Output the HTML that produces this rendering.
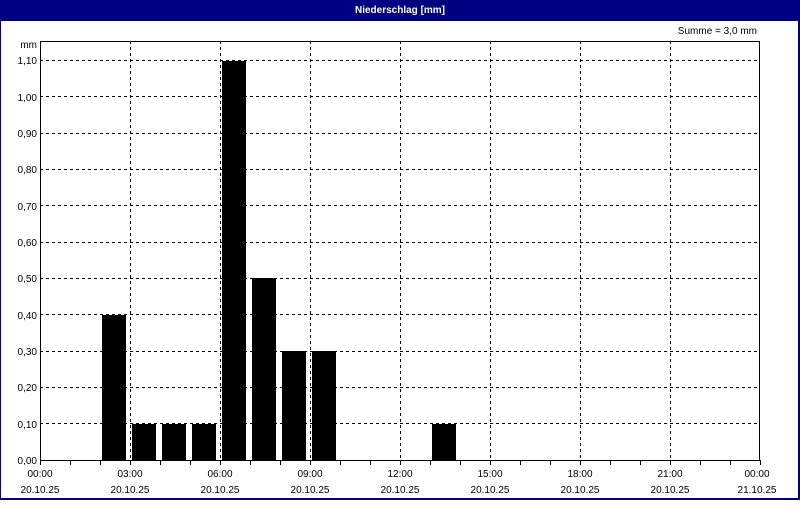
<!DOCTYPE html>
<html><head><style>body{margin:0;width:800px;height:500px;overflow:hidden;background:#fff}</style></head>
<body>
<svg width="800" height="500" xmlns="http://www.w3.org/2000/svg" font-family="Liberation Sans, sans-serif" font-size="10">
<rect x="0" y="0" width="800" height="500" fill="#000080"/>
<rect x="1" y="21" width="797" height="477" fill="#fff"/>
<text x="400" y="13" fill="#fff" font-weight="bold" text-anchor="middle" font-size="10">Niederschlag [mm]</text>
<text x="757" y="34" text-anchor="end">Summe = 3,0 mm</text>
<text x="37" y="48" text-anchor="end">mm</text>
<g stroke="#000" stroke-dasharray="3,3" stroke-width="1">
<line x1="40" y1="423.5" x2="760" y2="423.5"/><line x1="40" y1="387.5" x2="760" y2="387.5"/>
<line x1="40" y1="351.5" x2="760" y2="351.5"/><line x1="40" y1="314.5" x2="760" y2="314.5"/>
<line x1="40" y1="278.5" x2="760" y2="278.5"/><line x1="40" y1="242.5" x2="760" y2="242.5"/>
<line x1="40" y1="205.5" x2="760" y2="205.5"/><line x1="40" y1="169.5" x2="760" y2="169.5"/>
<line x1="40" y1="133.5" x2="760" y2="133.5"/><line x1="40" y1="96.5" x2="760" y2="96.5"/>
<line x1="40" y1="60.5" x2="760" y2="60.5"/>
<line x1="130.5" y1="41" x2="130.5" y2="460"/><line x1="220.5" y1="41" x2="220.5" y2="460"/>
<line x1="310.5" y1="41" x2="310.5" y2="460"/><line x1="400.5" y1="41" x2="400.5" y2="460"/>
<line x1="490.5" y1="41" x2="490.5" y2="460"/><line x1="580.5" y1="41" x2="580.5" y2="460"/>
<line x1="670.5" y1="41" x2="670.5" y2="460"/>
</g>
<g fill="#000">
<rect x="102" y="315" width="24" height="145"/>
<rect x="132" y="424" width="24" height="36"/>
<rect x="162" y="424" width="24" height="36"/>
<rect x="192" y="424" width="24" height="36"/>
<rect x="222" y="61" width="24" height="399"/>
<rect x="252" y="278" width="24" height="182"/>
<rect x="282" y="351" width="24" height="109"/>
<rect x="312" y="351" width="24" height="109"/>
<rect x="432" y="424" width="24" height="36"/>
</g>
<rect x="40.5" y="41.5" width="719" height="419" fill="none" stroke="#000"/>
<g stroke="#000">
<path d="M40.5 460v5M70.5 460v5M100.5 460v5M130.5 460v5M160.5 460v5M190.5 460v5M220.5 460v5M250.5 460v5M280.5 460v5M310.5 460v5M340.5 460v5M370.5 460v5M400.5 460v5M430.5 460v5M460.5 460v5M490.5 460v5M520.5 460v5M550.5 460v5M580.5 460v5M610.5 460v5M640.5 460v5M670.5 460v5M700.5 460v5M730.5 460v5M760.5 460v5"/>
</g>
<g text-anchor="end">
<text x="37" y="464">0,00</text><text x="37" y="428">0,10</text><text x="37" y="391">0,20</text>
<text x="37" y="355">0,30</text><text x="37" y="319">0,40</text><text x="37" y="282">0,50</text>
<text x="37" y="246">0,60</text><text x="37" y="210">0,70</text><text x="37" y="173">0,80</text>
<text x="37" y="137">0,90</text><text x="37" y="101">1,00</text><text x="37" y="64">1,10</text>
</g>
<g text-anchor="middle">
<text x="40" y="477">00:00</text><text x="40" y="493">20.10.25</text>
<text x="130" y="477">03:00</text><text x="130" y="493">20.10.25</text>
<text x="220" y="477">06:00</text><text x="220" y="493">20.10.25</text>
<text x="310" y="477">09:00</text><text x="310" y="493">20.10.25</text>
<text x="400" y="477">12:00</text><text x="400" y="493">20.10.25</text>
<text x="490" y="477">15:00</text><text x="490" y="493">20.10.25</text>
<text x="580" y="477">18:00</text><text x="580" y="493">20.10.25</text>
<text x="670" y="477">21:00</text><text x="670" y="493">20.10.25</text>
<text x="757" y="477">00:00</text><text x="757" y="493">21.10.25</text>
</g>
</svg>
</body></html>
